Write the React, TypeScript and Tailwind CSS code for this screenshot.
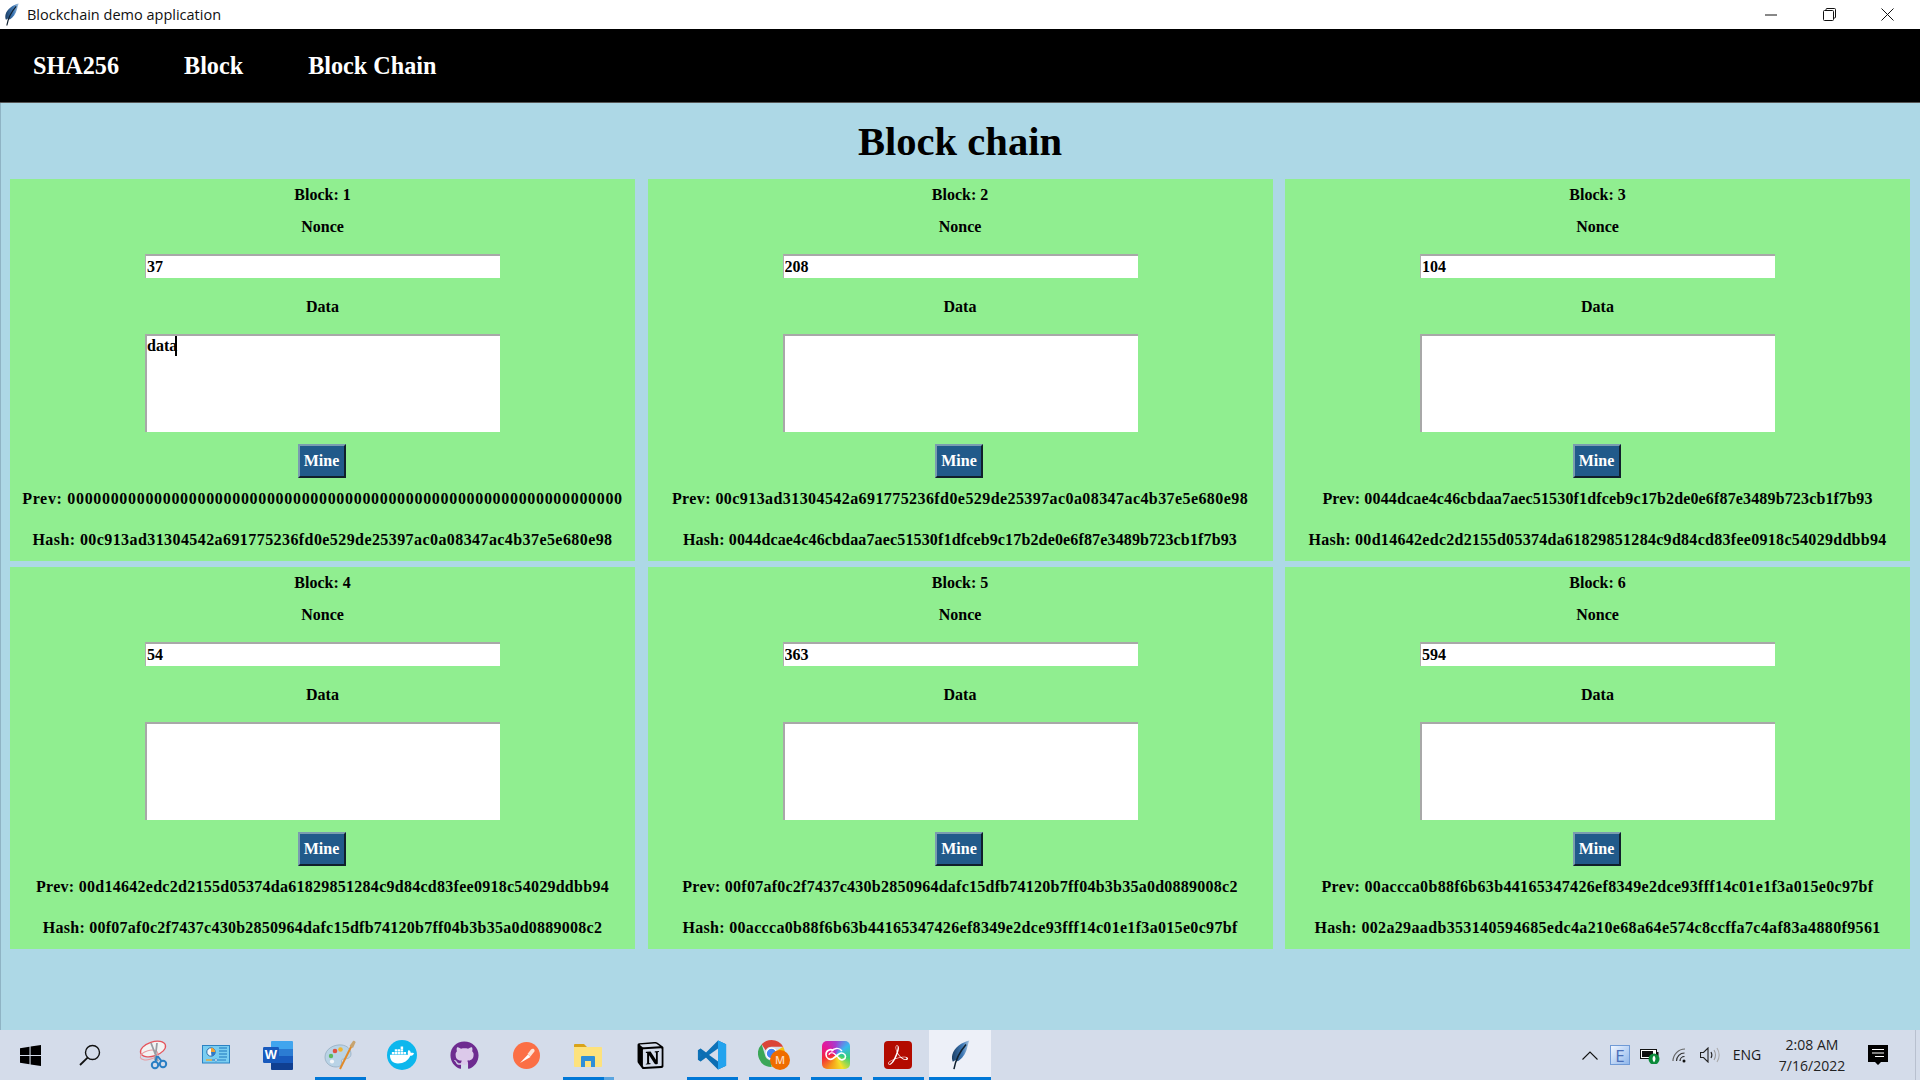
import React from "react";
import { FaDocker, FaGithub } from "react-icons/fa";
import { SiNotion, SiAdobeacrobatreader } from "react-icons/si";

type BlockData = { n: number; nonce: string; data?: string; prev: string; prevT: string; hash: string; hashT: string };

const h1 = "00c913ad31304542a691775236fd0e529de25397ac0a08347ac4b37e5e680e98";
const h2 = "0044dcae4c46cbdaa7aec51530f1dfceb9c17b2de0e6f87e3489b723cb1f7b93";
const h3 = "00d14642edc2d2155d05374da61829851284c9d84cd83fee0918c54029ddbb94";
const h4 = "00f07af0c2f7437c430b2850964dafc15dfb74120b7ff04b3b35a0d0889008c2";
const h5 = "00accca0b88f6b63b44165347426ef8349e2dce93fff14c01e1f3a015e0c97bf";
const h6 = "002a29aadb353140594685edc4a210e68a64e574c8ccffa7c4af83a4880f9561";

const blocks: BlockData[] = [
  { n: 1, nonce: "37", data: "data", prev: "0".repeat(64), prevT: "tracking-[0.68px]", hash: h1, hashT: "tracking-[0.42px]" },
  { n: 2, nonce: "208", prev: h1, prevT: "tracking-[0.42px]", hash: h2, hashT: "tracking-[0.15px]" },
  { n: 3, nonce: "104", prev: h2, prevT: "tracking-[0.15px]", hash: h3, hashT: "tracking-[0.29px]" },
  { n: 4, nonce: "54", prev: h3, prevT: "tracking-[0.27px]", hash: h4, hashT: "tracking-[0.25px]" },
  { n: 5, nonce: "363", prev: h4, prevT: "tracking-[0.25px]", hash: h5, hashT: "tracking-[0.32px]" },
  { n: 6, nonce: "594", prev: h5, prevT: "tracking-[0.33px]", hash: h6, hashT: "tracking-[0.35px]" },
];

function Feather({ size = 18, id }: { size?: number; id: string }) {
  return (
    <svg width={size} height={size * 1.35} viewBox="0 0 20 27">
      <defs>
        <linearGradient id={id} x1="0" y1="0" x2="1" y2="0">
          <stop offset="0" stopColor="#1c3f66" />
          <stop offset="0.6" stopColor="#3e78b5" />
          <stop offset="1" stopColor="#a9c6e2" />
        </linearGradient>
      </defs>
      <path d="M18.500 0.500C12 2 4.500 7 3 13.500c-.6 2.600-.3 4.600.5 6.300l2.500-1.500 2 1c3.800-2 7-6.500 8.300-11.300.7-2.600 1.300-5.400 2.200-7.500z" fill={`url(#${id})`} />
      <path d="M15.500 4C11 9 6.500 15 4.500 26.500" stroke="#10202f" strokeWidth="1.400" fill="none" />
    </svg>
  );
}

function Block({ b }: { b: BlockData }) {
  return (
    <div className="h-[382px] bg-[#90ee90] flex flex-col items-center pt-[7px] text-[16px] leading-[18px] font-bold text-black">
      <div>Block: {b.n}</div>
      <div className="mt-[14px]">Nonce</div>
      <input
        readOnly
        value={b.nonce}
        className="mt-[18px] w-[355px] h-[24px] bg-white border-t-2 border-l border-t-[#a8a8a8] border-l-[#b0b0b0] pl-[1px] font-bold outline-none"
      />
      <div className="mt-[20px]">Data</div>
      <div className="relative mt-[18px] w-[355px] h-[98px]">
        <textarea
          readOnly
          value={b.data ?? ""}
          className="block w-full h-full resize-none bg-white border-t-2 border-l-2 border-t-[#a8a8a8] border-l-[#a8a8a8] px-0 pt-[1px] font-bold outline-none overflow-hidden"
        />
        {b.data ? <span className="absolute left-[30px] top-[2px] w-[2px] h-[20px] bg-black" /> : null}
      </div>
      <button className="mt-[12px] mr-[2px] w-[48px] h-[34px] bg-[#215a8a] text-white text-[16px] font-bold border-2 border-t-[#7a9cb0] border-l-[#7a9cb0] border-r-[#10202c] border-b-[#10202c]">
        Mine
      </button>
      <div className={`mt-[12px] whitespace-nowrap ${b.prevT}`}>Prev: {b.prev}</div>
      <div className={`mt-[23px] whitespace-nowrap ${b.hashT}`}>Hash: {b.hash}</div>
    </div>
  );
}

const StartIcon = () => (
  <svg width="21" height="21" viewBox="0 0 21 21" fill="#000">
    <path d="M0 3.200 9.500 1.800v8.200H0zM10.600 1.600 21 0v10H10.600zM0 11h9.500v8.200L0 17.800zM10.600 11H21v10l-10.400-1.600z" />
  </svg>
);
const SearchIcon = () => (
  <svg width="22" height="22" viewBox="0 0 22 22" fill="none" stroke="#111" strokeWidth="1.400">
    <circle cx="13.500" cy="8.500" r="7" />
    <path d="M8.600 13.600 1 21" strokeWidth="1.800" />
  </svg>
);
const SnipIcon = () => (
  <svg width="30" height="30" viewBox="0 0 30 30" fill="none">
    <ellipse cx="14" cy="9" rx="13" ry="7" stroke="#e5545c" strokeWidth="1.300" transform="rotate(-18 14 9)" fill="#f3f3f3" />
    <ellipse cx="10" cy="15" rx="9" ry="4.500" stroke="#e79aa0" strokeWidth="1" transform="rotate(-15 10 15)" />
    <path d="M12 3 19 21M18 3 16 20" stroke="#9a9da3" strokeWidth="1.800" />
    <circle cx="16" cy="25" r="3.200" stroke="#2a7fc4" strokeWidth="2" />
    <circle cx="24" cy="24" r="3.200" stroke="#2a7fc4" strokeWidth="2" />
    <path d="M16.500 21.500 18 16M22.500 21 18.500 16" stroke="#2a7fc4" strokeWidth="2" />
  </svg>
);
const ControlIcon = () => (
  <svg width="28" height="20" viewBox="0 0 28 20">
    <rect x="0.500" y="0.500" width="27" height="17.500" fill="#79cdf1" stroke="#2b82c4" />
    <circle cx="9" cy="7" r="4.200" fill="#f4f7fb" stroke="#2b6ea8" />
    <path d="M9 7V2.800A4.200 4.200 0 0 1 13.200 7z" fill="#f0a030" />
    <path d="M9 7 13.200 7A4.200 4.200 0 0 1 9.500 11.200z" fill="#2e79c8" />
    <path d="M17 3h8M17 6h8M17 9h8M17 12h8" stroke="#1d76bd" strokeWidth="1.200" />
    <path d="M4 15h6" stroke="#f0a830" strokeWidth="1.400" />
    <path d="M10 15h14" stroke="#2a7fc4" strokeWidth="1" />
    <circle cx="14" cy="15" r="1.300" fill="#fff" stroke="#2a7fc4" strokeWidth=".6" />
  </svg>
);
const WordIcon = () => (
  <svg width="30" height="29" viewBox="0 0 30 29">
    <path d="M8 1a1 1 0 0 1 1-1h20a1 1 0 0 1 1 1v7H8z" fill="#41a5ee" />
    <rect x="8" y="8" width="22" height="7" fill="#2b7cd3" />
    <rect x="8" y="15" width="22" height="7" fill="#185abd" />
    <path d="M8 22h22v6a1 1 0 0 1-1 1H9a1 1 0 0 1-1-1z" fill="#103f91" />
    <rect x="0" y="6" width="16" height="16" rx="1.200" fill="#185abd" />
    <text x="8" y="18" textAnchor="middle" fontFamily="Liberation Sans, sans-serif" fontWeight="700" fontSize="13" fill="#fff">W</text>
  </svg>
);
const PaletteIcon = () => (
  <svg width="32" height="30" viewBox="0 0 32 30">
    <path d="M1 17C1 9 10 4 18 5c5 .7 9 4 9 9 0 4-4 5-7 5-2 0-3 1-2.500 3 .5 3-1.500 5-5.500 5C6 27 1 23 1 17z" fill="#b9d3e6" stroke="#8fa8bc" strokeWidth=".7" />
    <circle cx="7" cy="16" r="2.200" fill="#5cb85c" />
    <circle cx="11" cy="11" r="2.300" fill="#e2503f" />
    <circle cx="16.500" cy="9.500" r="2.300" fill="#f1b52e" />
    <circle cx="8" cy="21.500" r="2.100" fill="#f3f6f9" />
    <path d="M27.500 6 16 29" stroke="#e08a2a" strokeWidth="2" />
    <path d="M25.500 6 29 1c1.500-.5 2.500.5 2.500 1.500L29 8z" fill="#c7a470" />
  </svg>
);
const DockerIcon = () => (
  <span className="flex items-center justify-center w-[30px] h-[30px] rounded-full bg-[#0db7ed]">
    <FaDocker className="text-white w-[24px] h-[24px]" />
  </span>
);
const GithubIcon = () => (
  <span className="relative flex items-center justify-center w-[29px] h-[29px]">
    <span className="absolute inset-[5px] rounded-full bg-[#dcc9ea]" />
    <FaGithub className="relative text-[#6e2b90] w-[29px] h-[29px]" />
  </span>
);
const PostmanIcon = () => (
  <svg width="27" height="27" viewBox="0 0 27 27">
    <circle cx="13.500" cy="13.500" r="13.500" fill="#fb6f45" />
    <path d="M7 21 15 12.500 17.500 15z" fill="#fff" />
    <path d="M14.500 12 18 7.500c1.500-1.300 3.500-.7 3.600.9.100 1.300-1 2-1.800 3L17.500 14.500z" fill="#fde4d8" />
  </svg>
);
const ExplorerIcon = () => (
  <svg width="28" height="24" viewBox="0 0 28 24">
    <path d="M0 2a1 1 0 0 1 1-1h9l3 3h-13z" fill="#d9a31a" />
    <rect x="0" y="4" width="28" height="20" rx="1" fill="#fde27d" />
    <path d="M7 24V14a1 1 0 0 1 1-1h12a1 1 0 0 1 1 1v10h-4v-6h-6v6z" fill="#2f8fd8" />
  </svg>
);
const NotionIcon = () => (
  <span className="flex items-center justify-center w-[27px] h-[27px]">
    <SiNotion className="w-[27px] h-[27px] text-black" />
  </span>
);
const VscodeIcon = () => (
  <svg width="30" height="30" viewBox="0 0 100 100">
    <path d="M70 2 97 14v72L70 98 30 58 12 72 3 66V34l9-6 18 14z" fill="#0e72b8" />
    <path d="M70 2 97 14v72L70 98z" fill="#23a3ee" />
    <path d="M70 28 40 50l30 22z" fill="#d5dcea" />
    <path d="M3 34 12 28l58 44v26L30 58 12 72 3 66 17 50z" fill="#0a66a8" opacity=".35" />
  </svg>
);
const ChromeIcon = () => (
  <span className="relative block w-[32px] h-[30px]">
    <svg width="27" height="27" viewBox="0 0 28 28" className="absolute left-0 top-0">
      <path d="M14 0a14 14 0 0 1 12.100 7H14a7 7 0 0 0-6.100 3.500L3.800 4.500A14 14 0 0 1 14 0z" fill="#db4437" />
      <path d="M26.100 7A14 14 0 0 1 14 28l6-10.500A7 7 0 0 0 20 10.500z" fill="#f4c20d" />
      <path d="M14 28A14 14 0 0 1 3.800 4.500L7.900 17.500A7 7 0 0 0 14 21z" fill="#3aa757" />
      <circle cx="14" cy="14" r="5.500" fill="#4285f4" stroke="#fff" strokeWidth="1.300" />
    </svg>
    <span className="absolute right-0 bottom-0 flex items-center justify-center w-[20px] h-[20px] rounded-full bg-[#ef6c00] text-[#ffd9b8] text-[11px] font-semibold [font-family:'Open_Sans',sans-serif]">
      M
    </span>
  </span>
);
const AdobeIcon = () => (
  <span className="flex items-center justify-center w-[28px] h-[28px] rounded-[5px] bg-[conic-gradient(#a33fd1,#3ab7f0,#35d07a,#f5e02a,#f59a1a,#f3263b,#e5179a,#a33fd1)]">
    <svg width="24" height="16" viewBox="0 0 24 16" fill="none" stroke="#fff" strokeWidth="1.600">
      <path d="M9.500 3.500C6 1.500 2 3.500 2 7.500c0 4 4 6 7 4l6-4.500c2.500-2 6.500-.5 6.500 2.500 0 2.500-3 4-5 3l-2-1.500" />
      <path d="M7.500 4.500C9.500 1 15 0 18 4" strokeWidth="1.400" />
      <path d="M5 8c0-2 3-3 5-1.500l5 4.500" strokeWidth="1.200" />
    </svg>
  </span>
);
const AcrobatIcon = () => (
  <span className="flex items-center justify-center w-[28px] h-[28px] rounded-[4px] bg-[#b30b00]">
    <SiAdobeacrobatreader className="text-white w-[20px] h-[20px]" />
  </span>
);

const apps: { key: string; el: React.ReactNode; running?: boolean; grouped?: boolean; active?: boolean }[] = [
  { key: "snip", el: <SnipIcon /> },
  { key: "control", el: <ControlIcon /> },
  { key: "word", el: <WordIcon /> },
  { key: "paint", el: <PaletteIcon />, running: true },
  { key: "docker", el: <DockerIcon /> },
  { key: "github", el: <GithubIcon /> },
  { key: "postman", el: <PostmanIcon /> },
  { key: "explorer", el: <ExplorerIcon />, running: true, grouped: true },
  { key: "notion", el: <NotionIcon /> },
  { key: "vscode", el: <VscodeIcon />, running: true },
  { key: "chrome", el: <ChromeIcon />, running: true },
  { key: "adobe", el: <AdobeIcon />, running: true },
  { key: "acrobat", el: <AcrobatIcon />, running: true },
  { key: "feather", el: <Feather size={22} id="fth-task" />, running: true, active: true },
];

function Tray() {
  return (
    <div className="ml-auto flex items-center h-full text-[#1a1a1a] [font-family:'Open_Sans',sans-serif]">
      <div className="w-[30px] flex justify-center">
        <svg width="16" height="9" viewBox="0 0 16 9" fill="none" stroke="#111" strokeWidth="1.100"><path d="M.5 8.500 8 1l7.500 7.500" /></svg>
      </div>
      <div className="w-[30px] flex justify-center">
        <span className="flex items-center justify-center w-[20px] h-[20px] bg-gradient-to-br from-[#f0f6ff] to-[#8fb6ea] border border-[#6f9ad6] text-[#4a6fb8] text-[17px] leading-none">E</span>
      </div>
      <div className="w-[30px] flex justify-center">
        <svg width="20" height="18" viewBox="0 0 20 18">
          <rect x="0.500" y="3.500" width="16" height="9" fill="#fff" stroke="#111" />
          <rect x="2" y="5" width="11" height="6" fill="#111" />
          <rect x="17" y="6" width="1.500" height="4" fill="#111" />
          <circle cx="14" cy="13" r="5.500" fill="#0b8a3a" />
          <path d="M14 9.500c2 1.500 2 4.500 0 7-2-2.500-2-5.500 0-7z" fill="#fff" />
        </svg>
      </div>
      <div className="w-[30px] flex justify-center">
        <svg width="18" height="16" viewBox="0 0 18 16" fill="none">
          <circle cx="13" cy="14" r="1.500" fill="#111" />
          <path d="M9 14c0-2.500 2-4.500 4.500-4.500" stroke="#222" strokeWidth="1.200" />
          <path d="M5.500 14c0-4.500 3.500-8 8-8" stroke="#333" strokeWidth="1.200" />
          <path d="M2 14C2 7.500 7.500 2 14 2" stroke="#666" strokeWidth="1.200" />
        </svg>
      </div>
      <div className="w-[30px] flex justify-center">
        <svg width="21" height="16" viewBox="0 0 21 16" fill="none" strokeWidth="1.100">
          <path d="M.5 5.500h3L8 1v14L3.500 10.500h-3z" stroke="#222" />
          <path d="M11 5c1 1.700 1 4.300 0 6" stroke="#222" />
          <path d="M14 3c1.800 3 1.800 7 0 10" stroke="#999" />
          <path d="M17 1c2.800 4.500 2.800 9.500 0 14" stroke="#aaa" />
        </svg>
      </div>
      <div className="w-[44px] text-center text-[14px] leading-none">ENG</div>
      <div className="w-[86px] text-center text-[14px] leading-[21px] text-[#222]">
        <div>2:08 AM</div>
        <div>7/16/2022</div>
      </div>
      <div className="w-[46px] flex justify-center">
        <svg width="20" height="20" viewBox="0 0 20 20">
          <path d="M0 0h20v17h-7l-3 3-3-3H0z" fill="#000" />
          <path d="M4 4.500h12M4 8h12M7 11.500h9" stroke="#fff" strokeWidth="1.100" />
        </svg>
      </div>
      <div className="w-[14px]" />
      <div className="w-[5px] h-full border-l border-[#b8c0cf]" />
    </div>
  );
}

export default function App() {
  return (
    <div className="w-[1920px] h-[1080px] flex flex-col overflow-hidden bg-[#add8e6] [font-family:'Liberation_Serif',serif]">
      <header className="h-[29px] flex items-center bg-white shrink-0">
        <div className="w-[27px] flex justify-center pr-[4px]"><Feather size={17} id="fth-title" /></div>
        <span className="text-[14.5px] [font-family:'Open_Sans',sans-serif] text-[#111]">Blockchain demo application</span>
        <div className="ml-auto mr-[2px] flex items-center h-full">
          <div className="w-[58px] flex justify-center">
            <svg width="12" height="2" viewBox="0 0 12 2"><path d="M0 1h12" stroke="#111" strokeWidth="1" /></svg>
          </div>
          <div className="w-[58px] flex justify-center">
            <svg width="13" height="13" viewBox="0 0 13 13" fill="none" stroke="#111" strokeWidth="1">
              <rect x="0.500" y="2.500" width="10" height="10" rx="1" />
              <path d="M3 2.500V1.500a1 1 0 0 1 1-1h7.500a1 1 0 0 1 1 1V9a1 1 0 0 1-1 1h-1" />
            </svg>
          </div>
          <div className="w-[60px] flex justify-center pr-[1px]">
            <svg width="13" height="13" viewBox="0 0 13 13" stroke="#111" strokeWidth="1"><path d="M.5.500l12 12M12.500.500l-12 12" /></svg>
          </div>
        </div>
      </header>

      <nav className="h-[74px] shrink-0 bg-black border-b border-[#555] flex items-center gap-[65px] pl-[33px] pt-[2px] text-white text-[24.2px] font-bold">
        <span>SHA256</span>
        <span>Block</span>
        <span>Block Chain</span>
      </nav>

      <main className="flex-1 border-l border-[#8fb4c4] pl-[9px]">
        <h1 className="h-[76px] -ml-[10px] pt-[2px] flex items-center justify-center text-[40.6px] font-bold text-black">Block chain</h1>
        <div className="grid grid-cols-[repeat(3,625px)] gap-x-[12.5px] gap-y-[6px]">
          {blocks.map((b) => (
            <Block key={b.n} b={b} />
          ))}
        </div>
      </main>

      <footer className="h-[50px] shrink-0 flex bg-[#d4dcea]">
        <div className="w-[61px] flex items-center justify-center"><StartIcon /></div>
        <div className="w-[57px] mr-[5px] flex items-center justify-center"><SearchIcon /></div>
        {apps.map((a) => (
          <div key={a.key} className={`relative w-[62px] h-full flex items-center justify-center ${a.active ? "bg-[#edf0f8]" : ""}`}>
            {a.el}
            {a.running ? (
              <span className={`absolute bottom-0 h-[3px] bg-[#0078d7] ${a.active ? "left-0 right-0" : "left-[6px] right-[5px]"}`}>
                {a.grouped ? <span className="absolute right-0 top-0 bottom-0 w-[10px] bg-[#5aa5e0]" /> : null}
              </span>
            ) : null}
          </div>
        ))}
        <Tray />
      </footer>
    </div>
  );
}
